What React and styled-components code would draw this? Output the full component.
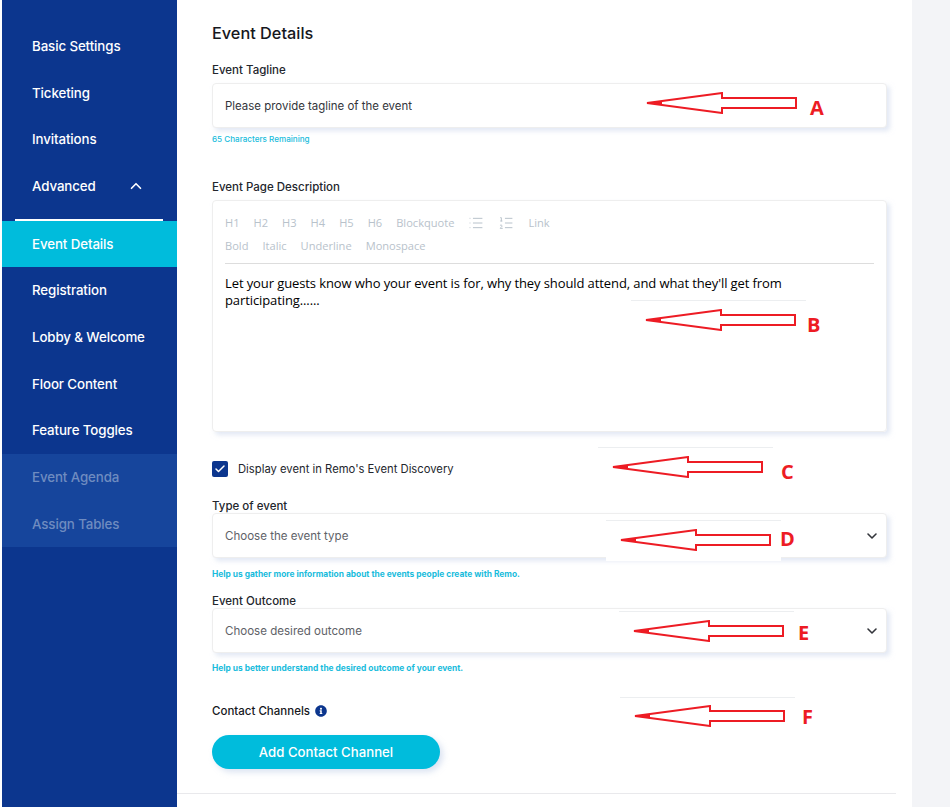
import styled, { createGlobalStyle } from "styled-components";
import { ChevronUp, ChevronDown, Check, List, ListOrdered } from "lucide-react";
import { FaInfoCircle } from "react-icons/fa";

const GlobalStyle = createGlobalStyle`
    html, body {
        margin: 0;
        padding: 0;
        background: #fff;
        font-family: Inter, "Noto Sans", sans-serif;
    }
    * { box-sizing: border-box; }
`;

const Page = styled.div`
    position: relative;
    display: flex;
    height: 807px;
    overflow: hidden;
    padding-left: 2px;
`;

const Sidebar = styled.nav`
    width: 175px;
    flex-shrink: 0;
    background: #0c368e;
    padding-top: 23px;
`;

const NavItem = styled.div`
    height: 46.67px;
    display: flex;
    align-items: center;
    padding: 0 0 0.6px 30px;
    font-size: 13.3px;
    font-weight: 500;
    letter-spacing: -0.1px;
    color: ${(p) => (p.$disabled ? "#6f8cc0" : "#fff")};
    background: ${(p) => (p.$active ? "#00bcdc" : p.$disabled ? "#16459c" : "transparent")};

    svg {
        margin-left: 31px;
    }
`;

const NavRule = styled.div`
    height: 2px;
    margin: 9px 14px 0 13px;
    background: #fff;
`;

const Main = styled.main`
    width: 735px;
    flex-shrink: 0;
    padding: 23px 0 0 35px;
`;

const Heading = styled.h1`
    margin: 0 0 18px;
    font-size: 16.3px;
    line-height: 21px;
    font-weight: 500;
    color: #16181d;
`;

const Label = styled.div`
    font-size: 11.5px;
    font-weight: 500;
    line-height: ${(p) => (p.$tight ? "14px" : "17px")};
    margin-bottom: ${(p) => (p.$tight ? "0" : "4px")};
    margin-top: ${(p) => p.$top || 0}px;
    color: #23262d;
`;

const Field = styled.div`
    width: 675px;
    height: 45px;
    display: flex;
    align-items: center;
    justify-content: space-between;
    padding: ${(p) => (p.$muted ? "0" : "1px")} 6px 0 12px;
    border: 1px solid #eeeeee;
    border-radius: 4px;
    background: #fff;
    box-shadow: 3px 3px 5px rgba(203, 213, 235, 0.55);
    font-size: ${(p) => (p.$muted ? "11.55px" : "11.45px")};
    color: ${(p) => (p.$muted ? "#606268" : "#33353b")};
`;

const Hint = styled.div`
    margin-top: ${(p) => p.$top || 5}px;
    font-size: ${(p) => (p.$strong ? "8.4px" : "8.1px")};
    line-height: 12px;
    font-weight: ${(p) => (p.$strong ? 700 : 500)};
    color: #19bcdc;
`;

const Editor = styled.div`
    width: 675px;
    height: 232px;
    padding: 10px 12px 0 12px;
    border: 1px solid #eeeeee;
    border-radius: 4px;
    box-shadow: 3px 3px 5px rgba(203, 213, 235, 0.55);
`;

const Toolbar = styled.div`
    border-bottom: 1px solid #dddddd;
    padding-bottom: 6px;
    margin-bottom: 11px;
`;

const ToolRow = styled.div`
    display: flex;
    align-items: center;
    gap: 14px;
    height: 23px;
    font-family: "Open Sans", sans-serif;
    font-size: 11.1px;
    color: #b8c2cb;
`;

const EditorText = styled.div`
    font-family: "Open Sans", sans-serif;
    font-size: 13px;
    letter-spacing: -0.1px;
    line-height: 17px;
    color: #000;
`;

const CheckRow = styled.div`
    display: flex;
    align-items: center;
    gap: 10px;
    margin: 29px 0 22px;
    font-size: 11.25px;
    font-weight: 400;
    color: #23262d;
`;

const CheckBox = styled.span`
    width: 16px;
    height: 16px;
    display: flex;
    align-items: center;
    justify-content: center;
    border-radius: 2px;
    background: #0c368e;
    color: #fff;
`;

const ContactTitle = styled.div`
    display: flex;
    align-items: center;
    gap: 5px;
    margin-top: 29px;
    height: 16px;
    font-size: 11.5px;
    font-weight: 500;
    color: #16181d;

    svg {
        color: #0c368e;
    }
`;

const AddButton = styled.button`
    display: block;
    width: 228px;
    height: 34px;
    margin-top: 16px;
    border: 0;
    border-radius: 17px;
    background: #00bcdc;
    color: #fff;
    font-family: inherit;
    font-size: 13.2px;
    font-weight: 500;
    box-shadow: 3px 3px 6px rgba(203, 213, 235, 0.7);
`;

const FootRule = styled.div`
    width: 719px;
    height: 1px;
    margin: 24px 0 0 -35px;
    background: #e9e9ec;
`;

const SidePanel = styled.div`
    flex: 1;
    background: #f3f4f7;
`;

/* the red markup pasted on top of the screenshot */
const Patch = styled.div`
    position: absolute;
    left: ${(p) => p.$x}px;
    top: ${(p) => p.$y}px;
    width: 175px;
    height: ${(p) => p.$h}px;
    background: #fff;
    border-top: 1px solid #eceef0;
`;

const ArrowSvg = styled.svg`
    position: absolute;
    left: ${(p) => p.$x}px;
    top: ${(p) => p.$y}px;
`;

const Letter = styled.span`
    position: absolute;
    left: ${(p) => p.$x}px;
    top: ${(p) => p.$y}px;
    font-family: "Open Sans", sans-serif;
    font-size: 20px;
    line-height: 20px;
    font-weight: 700;
    color: #ed1c24;
`;

const notes = [
    { letter: "A", tip: [646, 103], at: [810, 98] },
    { letter: "B", tip: [645, 320], at: [807, 315], patch: [631, 300, 40] },
    { letter: "C", tip: [612, 467], at: [781, 462], patch: [598, 447, 40] },
    { letter: "D", tip: [620, 540], at: [780, 529], patch: [606, 520, 41] },
    { letter: "E", tip: [633, 631], at: [798, 623], patch: [619, 611, 38] },
    { letter: "F", tip: [634, 716], at: [802, 707], patch: [620, 697, 40] },
];

const Note = ({ letter, tip, at, patch }) => (
    <>
        {patch && <Patch $x={patch[0]} $y={patch[1]} $h={patch[2]} />}
        <ArrowSvg $x={tip[0]} $y={tip[1] - 11} width="152" height="22" viewBox="0 0 152 22">
            <path
                d="M1 11 L76 1 V6 H150 V16 H76 V21 Z"
                fill="none"
                stroke="#ed1c24"
                strokeWidth="2"
            />
            <path d="M1 11 L16 9 V13 Z" fill="#ed1c24" />
        </ArrowSvg>
        <Letter $x={at[0]} $y={at[1]}>{letter}</Letter>
    </>
);

const App = () => {
    return (
        <>
            <GlobalStyle />
            <Page>
                <Sidebar>
                    <NavItem>Basic Settings</NavItem>
                    <NavItem>Ticketing</NavItem>
                    <NavItem>Invitations</NavItem>
                    <NavItem>
                        Advanced
                        <ChevronUp size={18} strokeWidth={2.2} />
                    </NavItem>
                    <NavRule />
                    <NavItem $active>Event Details</NavItem>
                    <NavItem>Registration</NavItem>
                    <NavItem>Lobby &amp; Welcome</NavItem>
                    <NavItem>Floor Content</NavItem>
                    <NavItem>Feature Toggles</NavItem>
                    <NavItem $disabled>Event Agenda</NavItem>
                    <NavItem $disabled>Assign Tables</NavItem>
                </Sidebar>

                <Main>
                    <Heading>Event Details</Heading>

                    <Label>Event Tagline</Label>
                    <Field>Please provide tagline of the event</Field>
                    <Hint>65 Characters Remaining</Hint>

                    <Label $top={34}>Event Page Description</Label>
                    <Editor>
                        <Toolbar>
                            <ToolRow>
                                <span>H1</span>
                                <span>H2</span>
                                <span>H3</span>
                                <span>H4</span>
                                <span>H5</span>
                                <span>H6</span>
                                <span>Blockquote</span>
                                <List size={16} strokeWidth={1.5} />
                                <ListOrdered size={16} strokeWidth={1.5} />
                                <span>Link</span>
                            </ToolRow>
                            <ToolRow>
                                <span>Bold</span>
                                <span>Italic</span>
                                <span>Underline</span>
                                <span>Monospace</span>
                            </ToolRow>
                        </Toolbar>
                        <EditorText>
                            Let your guests know who your event is for, why they should attend, and what they'll get from participating......
                        </EditorText>
                    </Editor>

                    <CheckRow>
                        <CheckBox>
                            <Check size={12} strokeWidth={3} />
                        </CheckBox>
                        Display event in Remo's Event Discovery
                    </CheckRow>

                    <Label $tight>Type of event</Label>
                    <Field $muted>
                        Choose the event type
                        <ChevronDown size={16} color="#33353b" strokeWidth={2.4} />
                    </Field>
                    <Hint $strong $top={10}>Help us gather more information about the events people create with Remo.</Hint>

                    <Label $tight $top={14}>Event Outcome</Label>
                    <Field $muted>
                        Choose desired outcome
                        <ChevronDown size={16} color="#33353b" strokeWidth={2.4} />
                    </Field>
                    <Hint $strong $top={9}>Help us better understand the desired outcome of your event.</Hint>

                    <ContactTitle>
                        Contact Channels
                        <FaInfoCircle size={12} />
                    </ContactTitle>
                    <AddButton>Add Contact Channel</AddButton>
                    <FootRule />
                </Main>

                <SidePanel />

                {notes.map((n) => (
                    <Note key={n.letter} {...n} />
                ))}
            </Page>
        </>
    );
};

export default App;
